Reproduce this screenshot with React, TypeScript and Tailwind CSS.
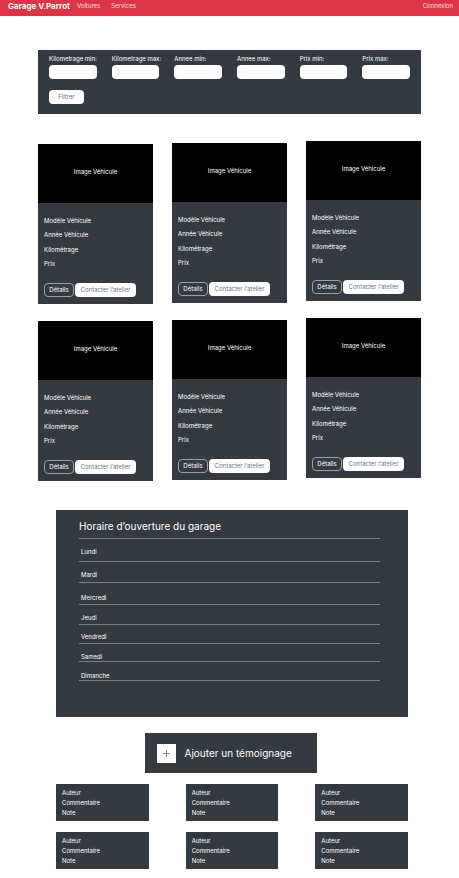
const filters = [
  { id: "km-min", label: "Kilometrage min:" },
  { id: "km-max", label: "Kilometrage max:" },
  { id: "annee-min", label: "Annee min:" },
  { id: "annee-max", label: "Annee max:" },
  { id: "prix-min", label: "Prix min:" },
  { id: "prix-max", label: "Prix max:" },
];

const vehicleColumns = ["pt-[3px]", "pt-[2px]", "pt-0"];

const days = [
  { name: "Lundi", row: "h-[23px] pb-[4px]" },
  { name: "Mardi", row: "h-[21px] pb-[2px]" },
  { name: "Mercredi", row: "h-[22px] pb-px" },
  { name: "Jeudi", row: "h-[20px] pb-px" },
  { name: "Vendredi", row: "h-[19px] pb-px" },
  { name: "Samedi", row: "h-[18px] leading-[8px]" },
  { name: "Dimanche", row: "h-[19px] leading-[8px]" },
];

function NavBar() {
  return (
    <nav className="flex h-4 items-center bg-[#dc3545] pb-1 pl-2 pr-[6px] leading-3 text-white">
      <a href="#accueil" className="mr-[7px] text-[8px] font-bold">
        Garage V.Parrot
      </a>
      <a href="#voitures" className="mr-[11px] text-white/80">
        Voitures
      </a>
      <a href="#services" className="text-white/80">
        Services
      </a>
      <a href="#connexion" className="ml-auto text-white/80">
        Connexion
      </a>
    </nav>
  );
}

function FilterForm() {
  return (
    <form className="bg-[#353a41] px-[11px] pb-[10px] pt-[3px] text-white" onSubmit={(e) => e.preventDefault()}>
      <div className="grid grid-cols-6 gap-x-[15px]">
        {filters.map((f) => (
          <div key={f.id} className="min-w-0">
            <label htmlFor={f.id} className="block whitespace-nowrap leading-[12px]">
              {f.label}
            </label>
            <input id={f.id} type="text" className="block h-[14px] w-full rounded-[4px] bg-white px-1 text-black" />
          </div>
        ))}
      </div>
      <button type="submit" className="mt-[11px] block h-[14px] w-[35px] rounded-[4px] bg-white leading-[14px] text-gray-500">
        Filtrer
      </button>
    </form>
  );
}

function VehicleCard() {
  return (
    <article className="bg-[#353a41] pb-[7px] text-white">
      <div className="flex h-[59px] items-center justify-center bg-black pb-[4px]">Image Véhicule</div>
      <ul className="mt-[10px] grid h-[58px] grid-rows-4 items-center px-[6px]">
        <li>Modèle Véhicule</li>
        <li>Année Véhicule</li>
        <li>Kilométrage</li>
        <li>Prix</li>
      </ul>
      <div className="mt-3 flex gap-px px-[6px]">
        <button type="button" className="h-[14px] w-[30px] rounded-[4px] border border-gray-400 leading-[12px]">
          Détails
        </button>
        <button type="button" className="h-[14px] w-[61px] whitespace-nowrap rounded-[4px] bg-white leading-[14px] text-gray-500">
          Contacter l’atelier
        </button>
      </div>
    </article>
  );
}

function OpeningHours() {
  return (
    <section className="bg-[#353a41] pb-9 pl-[23px] pr-7 pt-[7px] text-white">
      <h2 className="h-[22px] border-b border-[#7d8184] text-[10px] leading-[18px]">Horaire d’ouverture du garage</h2>
      <ul className="leading-[10px]">
        {days.map((d) => (
          <li key={d.name} className={`flex items-end border-b border-[#7d8184] pl-[2px] ${d.row}`}>
            {d.name}
          </li>
        ))}
      </ul>
    </section>
  );
}

function Testimonial() {
  return (
    <article className="bg-[#353a41] px-[6px] pb-[3px] pt-[4px] leading-[10px] text-white">
      <p>Auteur</p>
      <p>Commentaire</p>
      <p>Note</p>
    </article>
  );
}

export default function App() {
  return (
    <div className="bg-white font-['Inter',sans-serif] text-[6px]">
      <NavBar />
      <main className="px-[38px] pb-[10px] pt-[34px]">
        <FilterForm />
        <section className="mt-[27px] grid grid-cols-3 gap-x-[19px]">
          {vehicleColumns.map((offset) => (
            <div key={offset} className={`flex flex-col gap-[17px] ${offset}`}>
              <VehicleCard />
              <VehicleCard />
            </div>
          ))}
        </section>
        <div className="mt-[29px] pl-[18px] pr-[13px]">
          <OpeningHours />
          <div className="mt-4 flex justify-center pr-[3px]">
            <button type="button" className="flex h-10 w-[172px] items-center gap-[9px] bg-[#353a41] pl-3 text-[10px] text-white">
              <span className="flex size-[19px] items-center justify-center bg-white">
                <svg viewBox="0 0 9 9" className="size-[9px]" fill="none" stroke="#444" strokeWidth="0.6" aria-hidden="true">
                  <path d="M4.5 1v7M1 4.5h7" />
                </svg>
              </span>
              Ajouter un témoignage
            </button>
          </div>
          <section className="mt-[11px] grid grid-cols-3 gap-x-[37px] gap-y-[11px]">
            {[1, 2, 3, 4, 5, 6].map((n) => (
              <Testimonial key={n} />
            ))}
          </section>
        </div>
      </main>
    </div>
  );
}
